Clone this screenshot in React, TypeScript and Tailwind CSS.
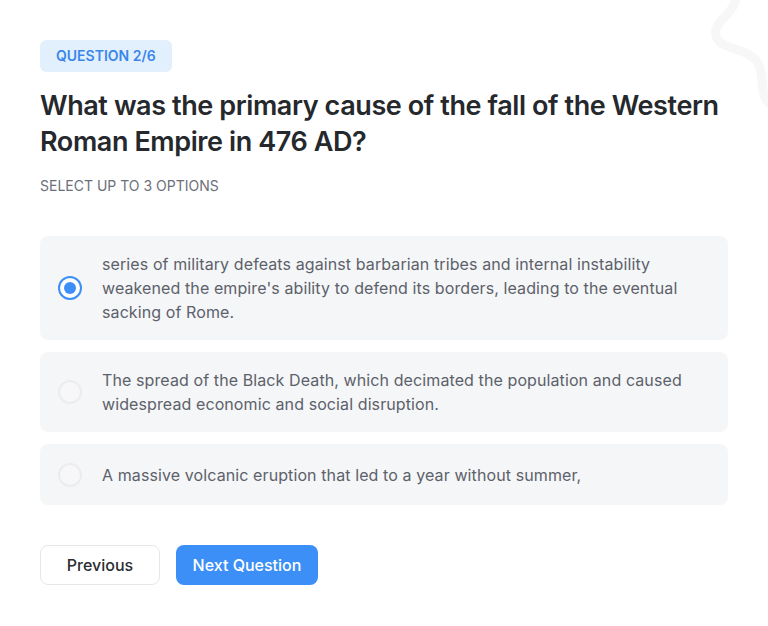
const options = [
  "series of military defeats against barbarian tribes and internal instability weakened the empire's ability to defend its borders, leading to the eventual sacking of Rome.",
  "The spread of the Black Death, which decimated the population and caused widespread economic and social disruption.",
  "A massive volcanic eruption that led to a year without summer,",
];

function Radio({ checked }: { checked: boolean }) {
  return (
    <div className="flex h-[29px] shrink-0 items-center">
      {checked ? (
        <div className="flex h-6 w-6 items-center justify-center rounded-full border-[2.5px] border-[#3b8ff6] bg-white">
          <div className="h-3 w-3 rounded-full bg-[#3b8ff6]" />
        </div>
      ) : (
        <div className="h-6 w-6 rounded-full border-2 border-[#ebecee] bg-[#f7f7f9]" />
      )}
    </div>
  );
}

export default function App() {
  return (
    <div className="relative min-h-screen overflow-hidden bg-white font-['Inter',sans-serif]">
      <svg className="absolute right-0 top-0" width="90" height="110" viewBox="678 0 90 110" fill="none">
        <path
          d="M736 -5 C737 14, 712 20, 716 36 C720 52, 754 46, 760 68 C764 84, 760 96, 770 104"
          stroke="#f7f7f8"
          strokeWidth="9"
          strokeLinecap="round"
        />
      </svg>
      <main className="relative px-10 pt-10">
        <span className="inline-flex h-8 items-center rounded-md bg-[#e2f0fe] px-4 text-sm font-semibold text-[#3a86ea]">
          QUESTION 2/6
        </span>
        <h1 className="mt-4 text-[27px] font-semibold leading-9 tracking-[-0.015em] text-[#25282c]">
          What was the primary cause of the fall of the Western Roman Empire in 476 AD?
        </h1>
        <p className="mt-4 text-sm leading-5 text-[#6b7079]">SELECT UP TO 3 OPTIONS</p>

        <div className="mt-10 flex flex-col gap-3">
          {options.map((text, i) => (
            <div key={i} className="flex items-center gap-5 rounded-lg bg-[#f5f6f8] py-4 pl-[18px] pr-10">
              <Radio checked={i === 0} />
              <p className="text-base leading-6 tracking-[0.1px] text-[#5c616a]">{text}</p>
            </div>
          ))}
        </div>

        <div className="mt-10 flex gap-4">
          <button className="h-10 w-[120px] rounded-lg border border-[#e5e7eb] bg-white text-base font-medium text-[#2a2d31]">
            Previous
          </button>
          <button className="h-10 w-[142px] rounded-lg bg-[#3b8ff6] text-base font-medium text-white">
            Next Question
          </button>
        </div>
      </main>
    </div>
  );
}
